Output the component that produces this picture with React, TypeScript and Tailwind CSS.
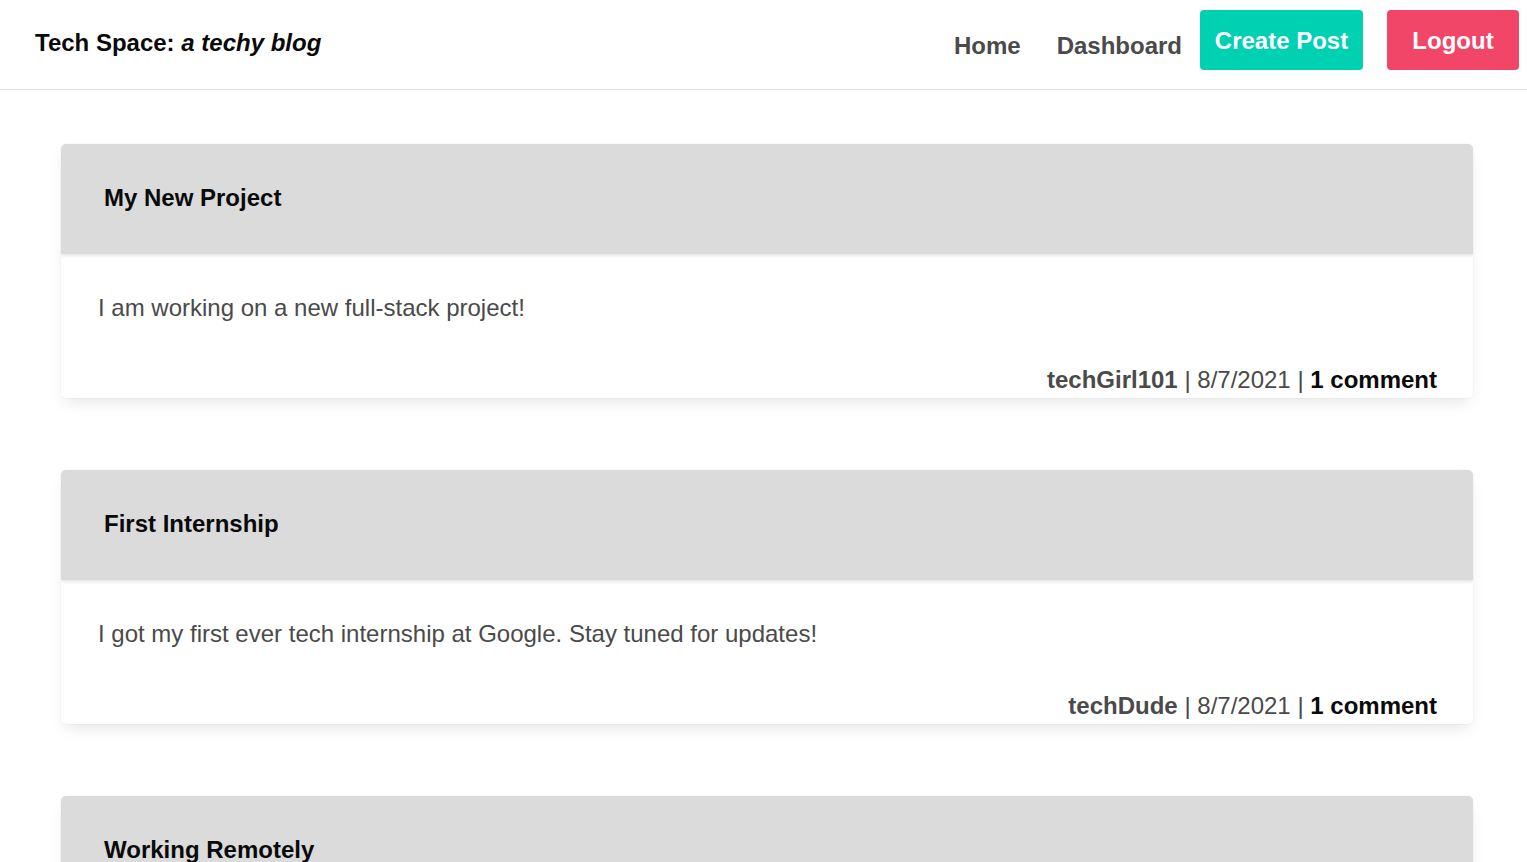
import React from 'react';

type Post = {
    title: string;
    body: string;
    author: string;
    date: string;
    comments: string;
};

const posts: Post[] = [
    { title: 'My New Project', body: 'I am working on a new full-stack project!', author: 'techGirl101', date: '8/7/2021', comments: '1 comment' },
    { title: 'First Internship', body: 'I got my first ever tech internship at Google. Stay tuned for updates!', author: 'techDude', date: '8/7/2021', comments: '1 comment' },
    { title: 'Working Remotely', body: 'Working from home has its ups and downs.', author: 'techGirl101', date: '8/7/2021', comments: '1 comment' },
];

const PostCard = ({ post }: { post: Post }) => {
    return (
        <article className="rounded-[5px] bg-white shadow-[0_8px_16px_-4px_rgba(10,10,10,0.1),0_0_0_1px_rgba(10,10,10,0.02)] overflow-hidden">
            {/* header */}
            <div className="h-[110px] bg-[#dbdbdb] flex items-center px-[43px] shadow-[0_2px_3px_rgba(10,10,10,0.1)] relative">
                <h2 className="text-[24px] font-bold text-[#0a0a0a] -mt-[2px]">{post.title}</h2>
            </div>
            {/* body */}
            <div className="pl-[37px] pr-[36px] pt-[37px] pb-[2px] text-[24px] leading-[33px]">
                <p className="text-[#4a4a4a]">{post.body}</p>
                <p className="mt-[39px] text-right text-[#4a4a4a]">
                    <span className="font-bold">{post.author}</span> | {post.date} |{' '}
                    <span className="font-bold text-[#0a0a0a]">{post.comments}</span>
                </p>
            </div>
        </article>
    );
};

export default function App() {
    return (
        <div className="min-h-screen bg-white font-['Liberation_Sans',Arial,sans-serif]">
            <nav className="h-[90px] border-b border-[#e0e0e0] flex items-center pl-[35px] pr-[8px]">
                <h1 className="text-[24px] font-bold text-[#0a0a0a] -mt-[3px]">
                    Tech Space: <em>a techy blog</em>
                </h1>
                <div className="ml-auto flex items-center h-full">
                    <a className="text-[24px] font-bold text-[#4a4a4a] px-[18px] mt-[2px]">Home</a>
                    <a className="text-[24px] font-bold text-[#4a4a4a] px-[18px] mt-[2px]">Dashboard</a>
                    <button className="h-[60px] w-[163px] rounded-[4px] bg-[#00d1b2] text-white text-[24px] font-bold -mt-[9px] pt-[2px]">
                        Create Post
                    </button>
                    <button className="ml-[24px] h-[60px] w-[132px] rounded-[4px] bg-[#f14668] text-white text-[24px] font-bold -mt-[9px] pt-[2px]">
                        Logout
                    </button>
                </div>
            </nav>
            <main className="pl-[61px] pr-[54px] pt-[54px] flex flex-col gap-[72px] pb-12">
                {posts.map((p) => (
                    <PostCard key={p.title} post={p} />
                ))}
            </main>
        </div>
    );
}
